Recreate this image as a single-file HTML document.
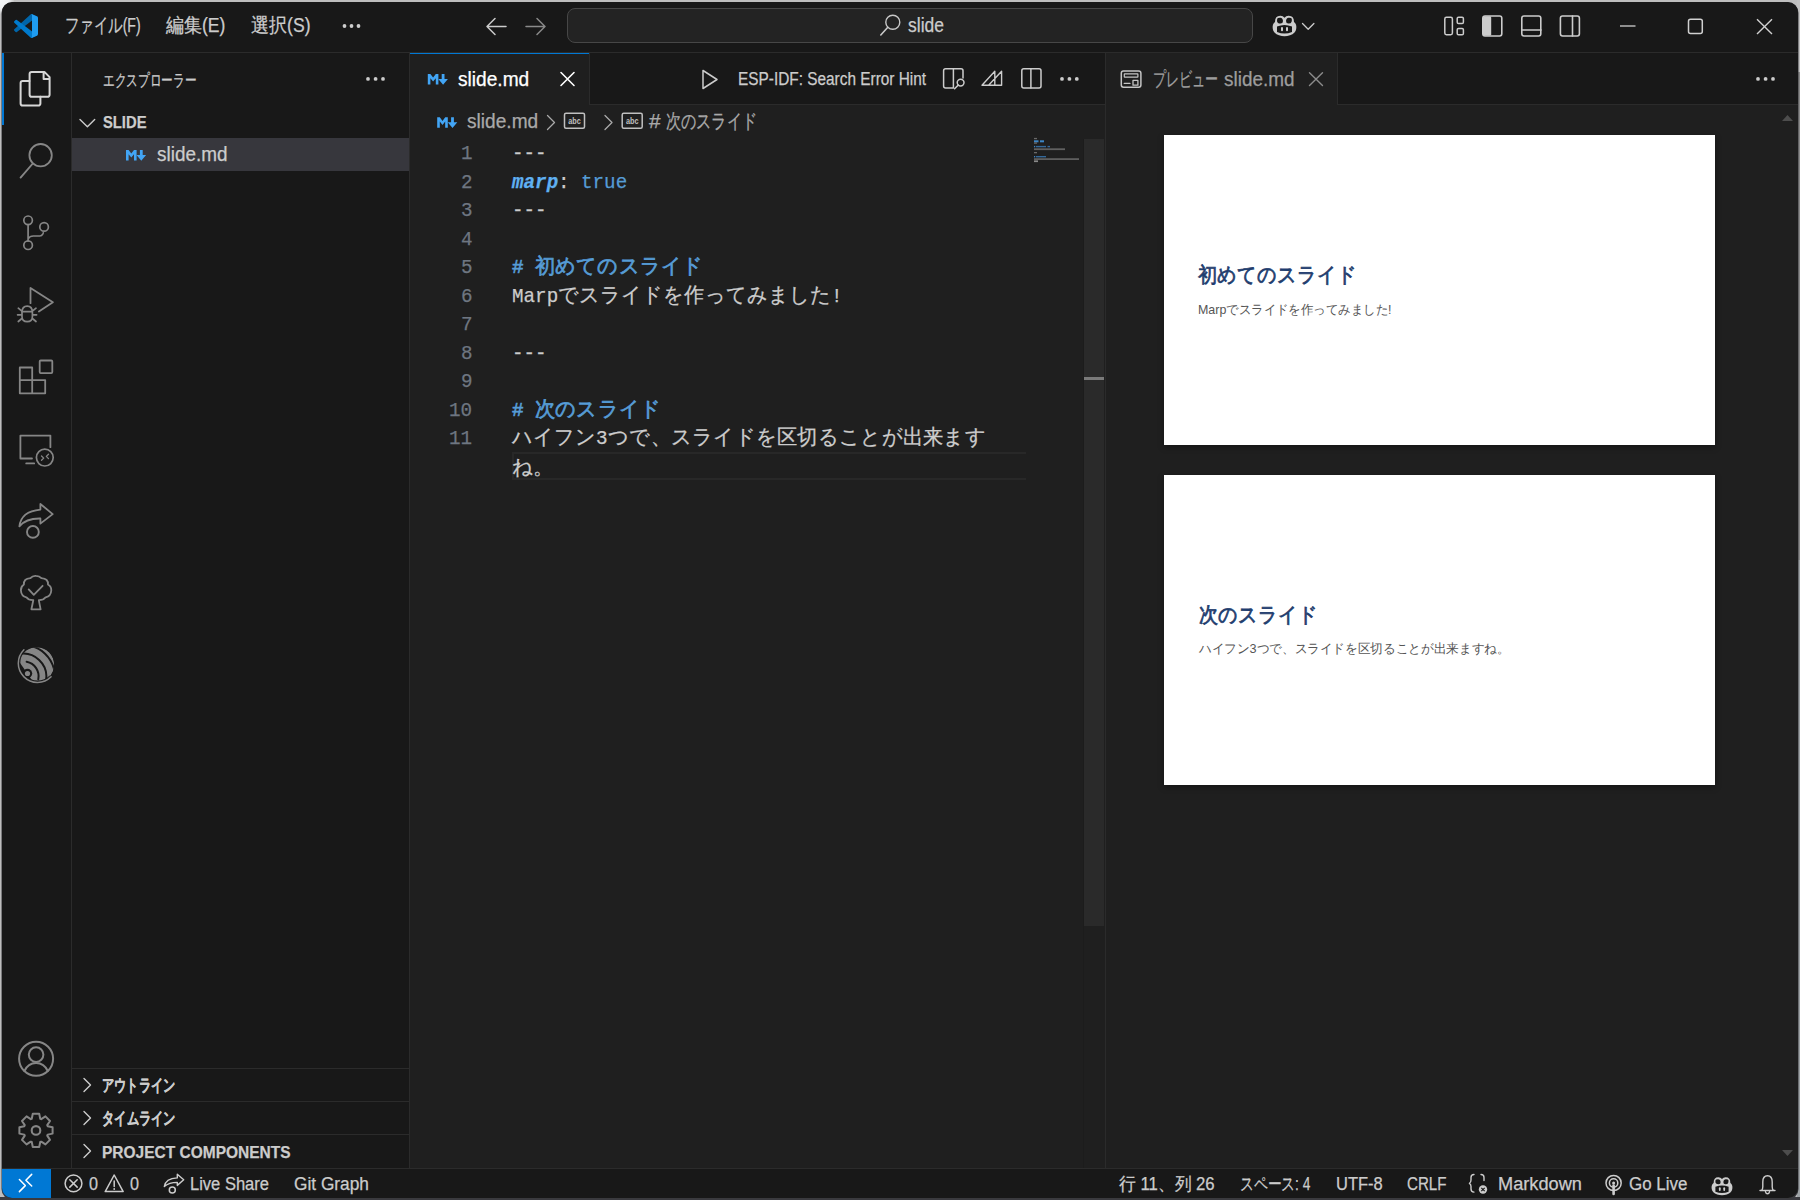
<!DOCTYPE html>
<html lang="ja">
<head>
<meta charset="utf-8">
<title>slide.md - Visual Studio Code</title>
<style>
*{box-sizing:border-box;margin:0;padding:0}
html,body{width:1800px;height:1200px;overflow:hidden;background:#bebebe;font-family:"Liberation Sans",sans-serif;color:#cccccc}
.a{position:absolute}
.t{position:absolute;white-space:pre;transform-origin:0 0;line-height:1;-webkit-text-stroke:0.25px currentColor}
#ov{position:absolute;left:0;top:0;width:1800px;height:1200px;overflow:visible}
</style>
</head>
<body>

<div class="a" style="left:0;top:0;width:14px;height:14px;background:radial-gradient(circle at 0 0,#f4f6f7 0,#eef0f1 9px,#c4c4c4 14px)"></div>
<div class="a" style="left:1797px;top:0;width:3px;height:72px;background:#c2c2c2"></div>
<div class="a" style="left:1797px;top:72px;width:3px;height:488px;background:#8c8c8c"></div>
<div class="a" style="left:1797px;top:560px;width:3px;height:640px;background:#9ea3a6"></div>
<div class="a" style="left:0;top:1197px;width:1800px;height:3px;background:#3b3b40"></div>
<div class="a" style="left:2px;top:2px;width:1796px;height:1196px;border-radius:10px;background:#181818;overflow:hidden;box-shadow:0 1px 0 0.5px #3a3a3e">
  <!-- status bar remote item -->
  <div class="a" style="left:0;top:1167px;width:49px;height:29px;background:#0078d4"></div>
</div>

<!-- title bar border -->
<div class="a" style="left:2px;top:52px;width:1796px;height:1px;background:#2b2b2b"></div>
<!-- search box -->
<div class="a" style="left:567px;top:8px;width:686px;height:35px;border:1px solid #474747;border-radius:8px;background:#232323"></div>

<!-- activity bar -->
<div class="a" style="left:71px;top:53px;width:1px;height:1115px;background:#2b2b2b"></div>
<div class="a" style="left:2px;top:53px;width:2px;height:72px;background:#0078d4"></div>

<!-- sidebar -->
<div class="a" style="left:409px;top:53px;width:1px;height:1115px;background:#2b2b2b"></div>
<div class="a" style="left:72px;top:138px;width:337px;height:33px;background:#37373d"></div>
<div class="a" style="left:72px;top:1068px;width:337px;height:1px;background:#2b2b2b"></div>
<div class="a" style="left:72px;top:1101px;width:337px;height:1px;background:#2b2b2b"></div>
<div class="a" style="left:72px;top:1134px;width:337px;height:1px;background:#2b2b2b"></div>

<!-- editor group 1 -->
<div class="a" style="left:410px;top:53px;width:695px;height:1115px;background:#1f1f1f"></div>
<div class="a" style="left:589px;top:53px;width:516px;height:52px;background:#181818;border-bottom:1px solid #2b2b2b;border-left:1px solid #2b2b2b"></div>
<div class="a" style="left:410px;top:53px;width:179px;height:1px;background:#0078d4"></div>
<!-- current line highlight -->
<div class="a" style="left:512px;top:452px;width:514px;height:28px;border:2px solid #282828;border-right:none"></div>
<!-- minimap slider / scrollbar -->
<div class="a" style="left:1084px;top:139px;width:20px;height:787px;background:#2a2a2a"></div>
<div class="a" style="left:1084px;top:377px;width:20px;height:3px;background:#7a7a7a"></div>
<div class="a" style="left:1083px;top:139px;width:1px;height:1029px;background:#1c1c1c"></div>

<!-- group separator -->
<div class="a" style="left:1105px;top:53px;width:1px;height:1115px;background:#2b2b2b"></div>

<!-- editor group 2 -->
<div class="a" style="left:1106px;top:53px;width:692px;height:1115px;background:#1f1f1f"></div>
<div class="a" style="left:1337px;top:53px;width:461px;height:52px;background:#181818;border-bottom:1px solid #2b2b2b;border-left:1px solid #2b2b2b"></div>

<div class="a" style="left:1164px;top:135px;width:551px;height:310px;background:#ffffff;box-shadow:0 2px 6px rgba(0,0,0,.35)"></div>
<div class="a" style="left:1164px;top:475px;width:551px;height:310px;background:#ffffff;box-shadow:0 2px 6px rgba(0,0,0,.35)"></div>

<!-- status bar -->
<div class="a" style="left:2px;top:1168px;width:1796px;height:1px;background:#2b2b2b"></div>

<div class="t" id="t0" style="left:65.00px;top:16.43px;font-size:19.5px;color:#cccccc;font-weight:normal;font-family:'Liberation Sans',sans-serif;font-style:normal;transform:scaleX(0.7206);">ファイル(F)</div>
<div class="t" id="t1" style="left:165.60px;top:16.43px;font-size:19.5px;color:#cccccc;font-weight:normal;font-family:'Liberation Sans',sans-serif;font-style:normal;transform:scaleX(0.9000);">編集(E)</div>
<div class="t" id="t2" style="left:250.90px;top:16.43px;font-size:19.5px;color:#cccccc;font-weight:normal;font-family:'Liberation Sans',sans-serif;font-style:normal;transform:scaleX(0.9015);">選択(S)</div>
<div class="t" id="t3" style="left:908.30px;top:16.03px;font-size:19.5px;color:#cccccc;font-weight:normal;font-family:'Liberation Sans',sans-serif;font-style:normal;transform:scaleX(0.8975);">slide</div>
<div class="t" id="t4" style="left:102.50px;top:71.97px;font-size:16.5px;color:#cccccc;font-weight:normal;font-family:'Liberation Sans',sans-serif;font-style:normal;transform:scaleX(0.6875);">エクスプローラー</div>
<div class="t" id="t5" style="left:102.50px;top:113.97px;font-size:16.5px;color:#cccccc;font-weight:bold;font-family:'Liberation Sans',sans-serif;font-style:normal;transform:scaleX(0.8952);">SLIDE</div>
<div class="t" id="t6" style="left:156.50px;top:144.93px;font-size:19.5px;color:#cccccc;font-weight:normal;font-family:'Liberation Sans',sans-serif;font-style:normal;transform:scaleX(0.9707);">slide.md</div>
<div class="t" id="t7" style="left:102.40px;top:1076.97px;font-size:16.5px;color:#cccccc;font-weight:bold;font-family:'Liberation Sans',sans-serif;font-style:normal;transform:scaleX(0.7176);">アウトライン</div>
<div class="t" id="t8" style="left:102.40px;top:1109.97px;font-size:16.5px;color:#cccccc;font-weight:bold;font-family:'Liberation Sans',sans-serif;font-style:normal;transform:scaleX(0.7216);">タイムライン</div>
<div class="t" id="t9" style="left:102.40px;top:1143.97px;font-size:16.5px;color:#cccccc;font-weight:bold;font-family:'Liberation Sans',sans-serif;font-style:normal;transform:scaleX(0.9393);">PROJECT COMPONENTS</div>
<div class="t" id="t10" style="left:457.80px;top:70.22px;font-size:19.5px;color:#ffffff;font-weight:normal;font-family:'Liberation Sans',sans-serif;font-style:normal;transform:scaleX(0.9804);">slide.md</div>
<div class="t" id="t11" style="left:737.90px;top:70.00px;font-size:18px;color:#cccccc;font-weight:normal;font-family:'Liberation Sans',sans-serif;font-style:normal;transform:scaleX(0.8548);">ESP-IDF: Search Error Hint</div>
<div class="t" id="t12" style="left:1152.80px;top:70.42px;font-size:19.5px;color:#9d9d9d;font-weight:normal;font-family:'Liberation Sans',sans-serif;font-style:normal;transform:scaleX(0.6530);">プレビュー</div>
<div class="t" id="t13" style="left:1223.60px;top:70.42px;font-size:19.5px;color:#9d9d9d;font-weight:normal;font-family:'Liberation Sans',sans-serif;font-style:normal;transform:scaleX(0.9721);">slide.md</div>
<div class="t" id="t14" style="left:466.80px;top:112.02px;font-size:19.5px;color:#a9a9a9;font-weight:normal;font-family:'Liberation Sans',sans-serif;font-style:normal;transform:scaleX(0.9804);">slide.md</div>
<div class="t" id="t15" style="left:649.00px;top:112.02px;font-size:19.5px;color:#a9a9a9;font-weight:normal;font-family:'Liberation Sans',sans-serif;font-style:normal;transform:scaleX(1.0682);">#</div>
<div class="t" id="t16" style="left:666.00px;top:112.02px;font-size:19.5px;color:#a9a9a9;font-weight:normal;font-family:'Liberation Sans',sans-serif;font-style:normal;transform:scaleX(0.7583);">次のスライド</div>
<div class="t" id="t17" style="left:460.65px;top:143.34px;font-size:21px;color:#6e7681;font-weight:normal;font-family:'Liberation Mono',monospace;font-style:normal;transform:scaleX(0.9160);">1</div>
<div class="t" id="t18" style="left:460.65px;top:171.84px;font-size:21px;color:#6e7681;font-weight:normal;font-family:'Liberation Mono',monospace;font-style:normal;transform:scaleX(0.9160);">2</div>
<div class="t" id="t19" style="left:460.65px;top:200.34px;font-size:21px;color:#6e7681;font-weight:normal;font-family:'Liberation Mono',monospace;font-style:normal;transform:scaleX(0.9160);">3</div>
<div class="t" id="t20" style="left:460.65px;top:228.84px;font-size:21px;color:#6e7681;font-weight:normal;font-family:'Liberation Mono',monospace;font-style:normal;transform:scaleX(0.9160);">4</div>
<div class="t" id="t21" style="left:460.65px;top:257.34px;font-size:21px;color:#6e7681;font-weight:normal;font-family:'Liberation Mono',monospace;font-style:normal;transform:scaleX(0.9160);">5</div>
<div class="t" id="t22" style="left:460.65px;top:285.84px;font-size:21px;color:#6e7681;font-weight:normal;font-family:'Liberation Mono',monospace;font-style:normal;transform:scaleX(0.9160);">6</div>
<div class="t" id="t23" style="left:460.65px;top:314.34px;font-size:21px;color:#6e7681;font-weight:normal;font-family:'Liberation Mono',monospace;font-style:normal;transform:scaleX(0.9160);">7</div>
<div class="t" id="t24" style="left:460.65px;top:342.84px;font-size:21px;color:#6e7681;font-weight:normal;font-family:'Liberation Mono',monospace;font-style:normal;transform:scaleX(0.9160);">8</div>
<div class="t" id="t25" style="left:460.65px;top:371.34px;font-size:21px;color:#6e7681;font-weight:normal;font-family:'Liberation Mono',monospace;font-style:normal;transform:scaleX(0.9160);">9</div>
<div class="t" id="t26" style="left:449.10px;top:399.84px;font-size:21px;color:#6e7681;font-weight:normal;font-family:'Liberation Mono',monospace;font-style:normal;transform:scaleX(0.9160);">10</div>
<div class="t" id="t27" style="left:449.10px;top:428.34px;font-size:21px;color:#6e7681;font-weight:normal;font-family:'Liberation Mono',monospace;font-style:normal;transform:scaleX(0.9160);">11</div>
<div class="t" id="t28" style="left:512.00px;top:143.34px;font-size:21px;color:#cccccc;font-weight:normal;font-family:'Liberation Mono',monospace;font-style:normal;transform:scaleX(0.9164);">---</div>
<div class="t" id="t29" style="left:512.00px;top:171.84px;font-size:21px;color:#5fb0f2;font-weight:bold;font-family:'Liberation Mono',monospace;font-style:italic;transform:scaleX(0.9163);">marp</div>
<div class="t" id="t30" style="left:558.20px;top:171.84px;font-size:21px;color:#cccccc;font-weight:normal;font-family:'Liberation Mono',monospace;font-style:normal;transform:scaleX(0.9160);">: </div>
<div class="t" id="t31" style="left:581.30px;top:171.84px;font-size:21px;color:#569cd6;font-weight:normal;font-family:'Liberation Mono',monospace;font-style:normal;transform:scaleX(0.9163);">true</div>
<div class="t" id="t32" style="left:512.00px;top:200.34px;font-size:21px;color:#cccccc;font-weight:normal;font-family:'Liberation Mono',monospace;font-style:normal;transform:scaleX(0.9164);">---</div>
<div class="t" id="t33" style="left:512.00px;top:257.34px;font-size:21px;color:#569cd6;font-weight:normal;font-family:'Liberation Mono',monospace;font-style:normal;-webkit-text-stroke:0.7px currentColor;transform:scaleX(0.9160);"># </div>
<div class="t" id="t34" style="left:535.10px;top:257.34px;font-size:21px;color:#569cd6;font-weight:normal;font-family:'Liberation Mono',monospace;font-style:normal;-webkit-text-stroke:0.7px currentColor;transform:scaleX(0.9600);">初めてのスライド</div>
<div class="t" id="t35" style="left:512.00px;top:285.84px;font-size:21px;color:#cccccc;font-weight:normal;font-family:'Liberation Mono',monospace;font-style:normal;transform:scaleX(0.9163);">Marp</div>
<div class="t" id="t36" style="left:558.20px;top:285.84px;font-size:21px;color:#cccccc;font-weight:normal;font-family:'Liberation Mono',monospace;font-style:normal;transform:scaleX(0.9579);">でスライドを作ってみました</div>
<div class="t" id="t37" style="left:831.20px;top:285.84px;font-size:21px;color:#cccccc;font-weight:normal;font-family:'Liberation Mono',monospace;font-style:normal;transform:scaleX(0.9160);">!</div>
<div class="t" id="t38" style="left:512.00px;top:342.84px;font-size:21px;color:#cccccc;font-weight:normal;font-family:'Liberation Mono',monospace;font-style:normal;transform:scaleX(0.9164);">---</div>
<div class="t" id="t39" style="left:512.00px;top:399.84px;font-size:21px;color:#569cd6;font-weight:normal;font-family:'Liberation Mono',monospace;font-style:normal;-webkit-text-stroke:0.7px currentColor;transform:scaleX(0.9160);"># </div>
<div class="t" id="t40" style="left:535.10px;top:399.84px;font-size:21px;color:#569cd6;font-weight:normal;font-family:'Liberation Mono',monospace;font-style:normal;-webkit-text-stroke:0.7px currentColor;transform:scaleX(0.9618);">次のスライド</div>
<div class="t" id="t41" style="left:512.00px;top:428.34px;font-size:21px;color:#cccccc;font-weight:normal;font-family:'Liberation Mono',monospace;font-style:normal;transform:scaleX(0.9545);">ハイフン</div>
<div class="t" id="t42" style="left:596.00px;top:428.34px;font-size:21px;color:#cccccc;font-weight:normal;font-family:'Liberation Mono',monospace;font-style:normal;transform:scaleX(0.9160);">3</div>
<div class="t" id="t43" style="left:607.55px;top:428.34px;font-size:21px;color:#cccccc;font-weight:normal;font-family:'Liberation Mono',monospace;font-style:normal;transform:scaleX(0.9668);">つで、スライドを区切ることが出来ます</div>
<div class="t" id="t44" style="left:512.00px;top:457.84px;font-size:21px;color:#cccccc;font-weight:normal;font-family:'Liberation Mono',monospace;font-style:normal;transform:scaleX(0.9767);">ね。</div>
<div class="t" id="t45" style="left:89.30px;top:1175.30px;font-size:18px;color:#cccccc;font-weight:normal;font-family:'Liberation Sans',sans-serif;font-style:normal;transform:scaleX(0.8986);">0</div>
<div class="t" id="t46" style="left:130.00px;top:1175.30px;font-size:18px;color:#cccccc;font-weight:normal;font-family:'Liberation Sans',sans-serif;font-style:normal;transform:scaleX(0.8986);">0</div>
<div class="t" id="t47" style="left:190.00px;top:1175.30px;font-size:18px;color:#cccccc;font-weight:normal;font-family:'Liberation Sans',sans-serif;font-style:normal;transform:scaleX(0.9179);">Live Share</div>
<div class="t" id="t48" style="left:294.30px;top:1175.30px;font-size:18px;color:#cccccc;font-weight:normal;font-family:'Liberation Sans',sans-serif;font-style:normal;transform:scaleX(0.9599);">Git Graph</div>
<div class="t" id="t49" style="left:1119.30px;top:1175.30px;font-size:18px;color:#cccccc;font-weight:normal;font-family:'Liberation Sans',sans-serif;font-style:normal;transform:scaleX(0.9317);">行 11、列 26</div>
<div class="t" id="t50" style="left:1239.90px;top:1175.30px;font-size:18px;color:#cccccc;font-weight:normal;font-family:'Liberation Sans',sans-serif;font-style:normal;transform:scaleX(0.7651);">スペース: 4</div>
<div class="t" id="t51" style="left:1335.50px;top:1175.30px;font-size:18px;color:#cccccc;font-weight:normal;font-family:'Liberation Sans',sans-serif;font-style:normal;transform:scaleX(0.9157);">UTF-8</div>
<div class="t" id="t52" style="left:1406.50px;top:1175.30px;font-size:18px;color:#cccccc;font-weight:normal;font-family:'Liberation Sans',sans-serif;font-style:normal;transform:scaleX(0.8401);">CRLF</div>
<div class="t" id="t53" style="left:1497.60px;top:1175.30px;font-size:18px;color:#cccccc;font-weight:normal;font-family:'Liberation Sans',sans-serif;font-style:normal;transform:scaleX(1.0105);">Markdown</div>
<div class="t" id="t54" style="left:1628.50px;top:1175.30px;font-size:18px;color:#cccccc;font-weight:normal;font-family:'Liberation Sans',sans-serif;font-style:normal;transform:scaleX(0.9428);">Go Live</div>
<div class="t" id="t55" style="left:1198.30px;top:263.65px;font-size:21px;color:#1f3d6e;font-weight:normal;font-family:'Liberation Sans',sans-serif;font-style:normal;-webkit-text-stroke:0.75px currentColor;transform:scaleX(0.9114);">初めてのスライド</div>
<div class="t" id="t56" style="left:1198.30px;top:303.45px;font-size:13px;color:#555555;font-weight:normal;font-family:'Liberation Sans',sans-serif;font-style:normal;-webkit-text-stroke:0;transform:scaleX(0.9563);">Marpでスライドを作ってみました!</div>
<div class="t" id="t57" style="left:1198.90px;top:603.65px;font-size:21px;color:#1f3d6e;font-weight:normal;font-family:'Liberation Sans',sans-serif;font-style:normal;-webkit-text-stroke:0.75px currentColor;transform:scaleX(0.9084);">次のスライド</div>
<div class="t" id="t58" style="left:1198.90px;top:641.95px;font-size:13px;color:#555555;font-weight:normal;font-family:'Liberation Sans',sans-serif;font-style:normal;-webkit-text-stroke:0;transform:scaleX(0.9726);">ハイフン3つで、スライドを区切ることが出来ますね。</div>

<svg id="ov" viewBox="0 0 1800 1200">
<g transform="translate(14,14) scale(0.24)">
<path fill="#0065A9" d="M96.46 10.8 75.86.87a6.23 6.23 0 0 0-7.1 1.2L1.3 63.6a4.16 4.16 0 0 0 0 6.16l5.5 5a4.16 4.16 0 0 0 5.32.24L93.32 13.4A4.14 4.14 0 0 1 100 16.7v-.24a6.25 6.25 0 0 0-3.54-5.65z"/>
<path fill="#007ACC" d="m96.46 89.2-20.6 9.93a6.23 6.23 0 0 1-7.1-1.2L1.3 36.4a4.16 4.16 0 0 1 0-6.16l5.5-5a4.16 4.16 0 0 1 5.32-.24l81.2 61.6a4.14 4.14 0 0 0 6.68-3.3v.24a6.25 6.25 0 0 1-3.54 5.65z"/>
<path fill="#1F9CF0" d="M75.86 99.13a6.23 6.23 0 0 1-7.1-1.2c2.3 2.3 6.24.67 6.24-2.58V4.65c0-3.25-3.94-4.88-6.24-2.58a6.23 6.23 0 0 1 7.1-1.2l20.6 9.92A6.25 6.25 0 0 1 100 16.43v67.14a6.25 6.25 0 0 1-3.54 5.64z"/>
</g>
<circle cx="344.5" cy="26" r="1.9" fill="#cccccc"/>
<circle cx="351.5" cy="26" r="1.9" fill="#cccccc"/>
<circle cx="358.5" cy="26" r="1.9" fill="#cccccc"/>
<path d="M487 26.5h19 M495 18.5l-8 8 8 8" fill="none" stroke="#cccccc" stroke-width="1.5" stroke-linecap="round" stroke-linejoin="round"/>
<path d="M526 26.5h19 M537 18.5l8 8-8 8" fill="none" stroke="#8a8a8a" stroke-width="1.5" stroke-linecap="round" stroke-linejoin="round"/>
<circle cx="892.8" cy="22.3" r="7" fill="none" stroke="#c8c8c8" stroke-width="1.4" stroke-linecap="round" stroke-linejoin="round"/><path d="M887.8 27.3 880.8 35" fill="none" stroke="#c8c8c8" stroke-width="1.6" stroke-linecap="round" stroke-linejoin="round"/>
<g transform="translate(1272,14.5) scale(1.0)">
<path d="M3 7.5 Q3 1 8.5 1.2 Q11 1.3 12.5 3.2 Q14 1.3 16.5 1.2 Q22 1 22 7.5 Q25 9.5 24.2 14.5 Q23.5 19 18 20.8 Q12.5 22.5 7 20.8 Q1.5 19 .8 14.5 Q0 9.5 3 7.5Z" fill="#cccccc"/>
<path d="M5.2 4.2 Q5.6 3.2 8.4 3.3 Q10.8 3.5 11 6.5 Q11 9 8.6 9.1 Q5 9.2 5 6.3Z M14 6.5 Q14.2 3.5 16.6 3.3 Q19.4 3.2 19.8 4.2 Q20 6.3 19.6 7.2 Q19 9.2 16.4 9.1 Q14 9 14 6.5Z" fill="#181818"/>
<path d="M5 12 Q12.5 9 20 12 L20 17.5 Q12.5 20.5 5 17.5Z" fill="#181818"/>
<rect x="9" y="12.5" width="2" height="4.2" rx="1" fill="#cccccc"/><rect x="14" y="12.5" width="2" height="4.2" rx="1" fill="#cccccc"/>
</g>
<path d="M1302.5 23.5l5.7 5.7 5.7-5.7" fill="none" stroke="#cccccc" stroke-width="1.3" stroke-linecap="round" stroke-linejoin="round"/>
<rect x="1444.8" y="17.3" width="7.6" height="17.4" rx="1.6" fill="none" stroke="#cccccc" stroke-width="1.5" stroke-linecap="round" stroke-linejoin="round"/>
<rect x="1457.2" y="17.3" width="6.2" height="6.2" rx="1.3" fill="none" stroke="#cccccc" stroke-width="1.5" stroke-linecap="round" stroke-linejoin="round"/><rect x="1457.2" y="28.5" width="6.2" height="6.2" rx="1.3" fill="none" stroke="#cccccc" stroke-width="1.5" stroke-linecap="round" stroke-linejoin="round"/>
<rect x="1482.8" y="16" width="19" height="20" rx="2.2" fill="none" stroke="#cccccc" stroke-width="1.6" stroke-linecap="round" stroke-linejoin="round"/><rect x="1483" y="16.3" width="8.2" height="19.4" rx="1.4" fill="#cccccc"/>
<rect x="1521.8" y="16" width="19" height="20" rx="2.2" fill="none" stroke="#cccccc" stroke-width="1.6" stroke-linecap="round" stroke-linejoin="round"/><path d="M1522 30h19" fill="none" stroke="#cccccc" stroke-width="1.6" stroke-linecap="round" stroke-linejoin="round"/>
<rect x="1560.4" y="16" width="19" height="20" rx="2.2" fill="none" stroke="#cccccc" stroke-width="1.6" stroke-linecap="round" stroke-linejoin="round"/><path d="M1572.5 16v20" fill="none" stroke="#cccccc" stroke-width="1.6" stroke-linecap="round" stroke-linejoin="round"/>
<path d="M1620 26h15.5" stroke="#d0d0d0" stroke-width="1.3"/>
<rect x="1688.5" y="19.3" width="13.8" height="14.2" rx="2" fill="none" stroke="#d0d0d0" stroke-width="1.5"/>
<path d="M1757 19.2 1772 34 M1772 19.2 1757 34" stroke="#d0d0d0" stroke-width="1.4"/>
<path d="M29.6 74a2.1 2.1 0 0 1 2.1-2.1h12.7l5.2 5.2v17.6a2.1 2.1 0 0 1-2.1 2.1H31.7a2.1 2.1 0 0 1-2.1-2.1Z M43.6 72v7.1h6" fill="none" stroke="#d7d7d7" stroke-width="2" stroke-linecap="round" stroke-linejoin="round"/>
<path d="M29.4 81H22.7a2.1 2.1 0 0 0-2.1 2.1v20.4a2.1 2.1 0 0 0 2.1 2.1h15.6a2.1 2.1 0 0 0 2.1-2.1v-6.7" fill="none" stroke="#d7d7d7" stroke-width="2" stroke-linecap="round" stroke-linejoin="round"/>
<circle cx="40.6" cy="155.2" r="11.2" fill="none" stroke="#868686" stroke-width="1.8" stroke-linecap="round" stroke-linejoin="round"/><path d="M32.8 163.5 20.6 177.6" fill="none" stroke="#868686" stroke-width="1.9" stroke-linecap="round" stroke-linejoin="round"/>
<circle cx="28.1" cy="220.3" r="4.3" fill="none" stroke="#868686" stroke-width="1.7" stroke-linecap="round" stroke-linejoin="round"/><circle cx="28.1" cy="245.2" r="4.3" fill="none" stroke="#868686" stroke-width="1.7" stroke-linecap="round" stroke-linejoin="round"/><circle cx="44.1" cy="226.9" r="4.3" fill="none" stroke="#868686" stroke-width="1.7" stroke-linecap="round" stroke-linejoin="round"/>
<path d="M28.1 224.6v16.3 M28.3 238.6q1.5-2.6 5-2.6h6.6q1.8 0 3-2.2l.4-1" fill="none" stroke="#868686" stroke-width="1.7" stroke-linecap="round" stroke-linejoin="round"/>
<path d="M30.5 303.2V288l22.4 14.3-14 9.3" fill="none" stroke="#868686" stroke-width="1.8" stroke-linecap="round" stroke-linejoin="round"/>
<path d="M21.8 311.7h10.5 M22 312.5q0-6.4 5.2-6.4 5.2 0 5.2 6.4v4q0 5.2-5.2 5.2-5.2 0-5.2-5.2Z M17.6 314.8h4.2 M32.6 314.8h4 M18.3 308.2l3.6 3 M36 308.2l-3.6 3 M18.3 321.5l3.6-3 M36 321.5l-3.6-3" fill="none" stroke="#868686" stroke-width="1.7" stroke-linecap="round" stroke-linejoin="round"/>
<path d="M19.8 367.5h12.4v12.6h13v13.2H19.8Z M32.2 380.1v13.2 M19.8 380.1h12.4" fill="none" stroke="#868686" stroke-width="1.8" stroke-linecap="round" stroke-linejoin="round"/><rect x="39.7" y="360.5" width="12.6" height="12.6" rx="1" fill="none" stroke="#868686" stroke-width="1.8" stroke-linecap="round" stroke-linejoin="round"/>
<path d="M32 458.5H20.4V435.6h30v11.6 M26.2 463.4h8" fill="none" stroke="#868686" stroke-width="1.8" stroke-linecap="round" stroke-linejoin="round"/><circle cx="44.8" cy="457.6" r="8.4" fill="none" stroke="#868686" stroke-width="1.7" stroke-linecap="round" stroke-linejoin="round"/><path d="M41.5 456l2.2 2.1-2.2 2.2 M48.5 454.3l-2.2 2.1 2.2 2.2" fill="none" stroke="#868686" stroke-width="1.3" stroke-linecap="round" stroke-linejoin="round"/>
<path d="M19.4 526.4Q21 511.4 40.4 509.6V504l12.3 10.1-12.3 9.5v-5.1Q26 518.2 19.4 526.4Z" fill="none" stroke="#868686" stroke-width="1.8" stroke-linecap="round" stroke-linejoin="round"/><circle cx="32.9" cy="531.9" r="5.9" fill="none" stroke="#868686" stroke-width="1.9" stroke-linecap="round" stroke-linejoin="round"/>
<path d="M33.3 600.2Q28.5 600.3 26.4 597.3Q21.2 596.2 20.9 590.3Q20.8 586.5 23.9 584.5Q23.5 578.7 30.4 578.2Q32.6 575.6 35.9 575.9Q39.4 575.9 41.4 578.2Q48.4 578.7 48 584.5Q51.4 586.5 51.3 590.3Q51 596.2 45.6 597.3Q43.3 600.3 38.8 600.2L40.6 609.3H31.4Z" fill="none" stroke="#868686" stroke-width="1.8" stroke-linecap="round" stroke-linejoin="round"/><path d="M28.7 589.4l5.1 5.5 8.8-9.1" fill="none" stroke="#868686" stroke-width="1.8" stroke-linecap="round" stroke-linejoin="round"/>
<clipPath id="espc"><circle cx="36.6" cy="664.8" r="17.6"/></clipPath>
<g clip-path="url(#espc)">
<circle cx="36.6" cy="664.8" r="17.6" fill="#868686"/>
<path d="M0.9 635.2 46.5 701.2 0 701.2Z" fill="#181818"/>
<circle cx="27.5" cy="673.5" r="4.7" fill="#181818"/>
<path d="M26.62 661.77A14.8 14.8 0 0 1 38.28 679.38" fill="none" stroke="#181818" stroke-width="2" stroke-linecap="round"/>
<path d="M17.35 654.38A23 23 0 0 1 45.80 681.38" fill="none" stroke="#181818" stroke-width="2"/>
<path d="M15.12 646.08A31.6 31.6 0 0 1 54.21 683.17" fill="none" stroke="#181818" stroke-width="2"/>
<path d="M23.9 649.7A18.9 18.9 0 1 0 51.1 676.8" fill="none" stroke="#181818" stroke-width="4"/>
</g>
<circle cx="27.5" cy="673.5" r="2.6" fill="#868686"/>
<path d="M23.9 649.7A18.9 18.9 0 1 0 51.1 676.8" fill="none" stroke="#868686" stroke-width="1.5" stroke-linecap="round"/>

<circle cx="36.1" cy="1058.75" r="17" fill="none" stroke="#868686" stroke-width="2" stroke-linecap="round" stroke-linejoin="round"/><circle cx="36.1" cy="1054.6" r="7.3" fill="none" stroke="#868686" stroke-width="2" stroke-linecap="round" stroke-linejoin="round"/><path d="M24.4 1071Q28 1062.9 36.1 1062.9 44.2 1062.9 47.8 1071" fill="none" stroke="#868686" stroke-width="2" stroke-linecap="round" stroke-linejoin="round"/>
<path d="M31.76 1118.75 L32.78 1113.81 L39.22 1113.81 L40.24 1118.75 L41.24 1119.16 L45.45 1116.39 L50.01 1120.95 L47.24 1125.16 L47.65 1126.16 L52.59 1127.18 L52.59 1133.62 L47.65 1134.64 L47.24 1135.64 L50.01 1139.85 L45.45 1144.41 L41.24 1141.64 L40.24 1142.05 L39.22 1146.99 L32.78 1146.99 L31.76 1142.05 L30.76 1141.64 L26.55 1144.41 L21.99 1139.85 L24.76 1135.64 L24.35 1134.64 L19.41 1133.62 L19.41 1127.18 L24.35 1126.16 L24.76 1125.16 L21.99 1120.95 L26.55 1116.39 L30.76 1119.16Z" fill="none" stroke="#868686" stroke-width="2" stroke-linecap="round" stroke-linejoin="round"/><circle cx="36" cy="1130.4" r="4.3" fill="none" stroke="#868686" stroke-width="2.1" stroke-linecap="round" stroke-linejoin="round"/>
<circle cx="368" cy="78.9" r="1.9" fill="#cccccc"/>
<circle cx="375.6" cy="78.9" r="1.9" fill="#cccccc"/>
<circle cx="383" cy="78.9" r="1.9" fill="#cccccc"/>
<path d="M80 119.6l7.4 7.2 7.3-7.2" fill="none" stroke="#cccccc" stroke-width="1.4" stroke-linecap="round" stroke-linejoin="round"/>
<g transform="translate(126,150) scale(1.0)" fill="#42a5f5">
<path d="M0 0h2.6l2.7 3.6L8 0h2.6v10.5H8V4.2L5.3 7.6 2.6 4.2v6.3H0Z"/>
<path d="M13.9 0h2.8v5h3.4l-4.8 5.7-4.8-5.7h3.4Z"/>
</g>
<path d="M84 1078.5l6.5 6.5-6.5 6.5" fill="none" stroke="#cccccc" stroke-width="1.4" stroke-linecap="round" stroke-linejoin="round"/>
<path d="M84 1111.5l6.5 6.5-6.5 6.5" fill="none" stroke="#cccccc" stroke-width="1.4" stroke-linecap="round" stroke-linejoin="round"/>
<path d="M84 1144.5l6.5 6.5-6.5 6.5" fill="none" stroke="#cccccc" stroke-width="1.4" stroke-linecap="round" stroke-linejoin="round"/>
<g transform="translate(427.8,74) scale(1.0)" fill="#42a5f5">
<path d="M0 0h2.6l2.7 3.6L8 0h2.6v10.5H8V4.2L5.3 7.6 2.6 4.2v6.3H0Z"/>
<path d="M13.9 0h2.8v5h3.4l-4.8 5.7-4.8-5.7h3.4Z"/>
</g>
<path d="M561 72.5 574 85.5 M574 72.5 561 85.5" fill="none" stroke="#ffffff" stroke-width="1.6" stroke-linecap="round" stroke-linejoin="round"/>
<path d="M703 70.5v18l14-9Z" fill="none" stroke="#cccccc" stroke-width="1.5" stroke-linecap="round" stroke-linejoin="round"/>
<path d="M963 78V70.7a2 2 0 0 0-2-2h-15.4a2 2 0 0 0-2 2v15.4a2 2 0 0 0 2 2h7.8 M953.4 68.8v19.3" fill="none" stroke="#cccccc" stroke-width="1.5" stroke-linecap="round" stroke-linejoin="round"/><circle cx="960.6" cy="82.6" r="3.4" fill="none" stroke="#cccccc" stroke-width="1.5" stroke-linecap="round" stroke-linejoin="round"/><path d="M958.3 85 954.6 88.7" fill="none" stroke="#cccccc" stroke-width="1.6" stroke-linecap="round" stroke-linejoin="round"/>
<path d="M982 85.2 994.8 71.3V85.2Z M988.6 85.2 1001.6 71.3V85.2Z" fill="none" stroke="#cccccc" stroke-width="1.4" stroke-linecap="round" stroke-linejoin="round"/>
<rect x="1021.8" y="68.8" width="19.2" height="19.2" rx="2" fill="none" stroke="#cccccc" stroke-width="1.5" stroke-linecap="round" stroke-linejoin="round"/><path d="M1030.9 68.8v19.2" fill="none" stroke="#cccccc" stroke-width="1.5" stroke-linecap="round" stroke-linejoin="round"/>
<circle cx="1062" cy="78.9" r="1.9" fill="#cccccc"/>
<circle cx="1069.4" cy="78.9" r="1.9" fill="#cccccc"/>
<circle cx="1076.8" cy="78.9" r="1.9" fill="#cccccc"/>
<g transform="translate(437.2,117.3) scale(1.0)" fill="#42a5f5">
<path d="M0 0h2.6l2.7 3.6L8 0h2.6v10.5H8V4.2L5.3 7.6 2.6 4.2v6.3H0Z"/>
<path d="M13.9 0h2.8v5h3.4l-4.8 5.7-4.8-5.7h3.4Z"/>
</g>
<path d="M547.5 115.5l7 7-7 7 M605 115.5l7 7-7 7" fill="none" stroke="#a9a9a9" stroke-width="1.3" stroke-linecap="round" stroke-linejoin="round"/>
<rect x="564.5" y="113.2" width="20" height="15" rx="1.5" fill="none" stroke="#c0c0c0" stroke-width="1.5" stroke-linecap="round" stroke-linejoin="round"/>
<text x="574.5" y="124.3" font-family="Liberation Sans" font-weight="bold" font-size="9" fill="#c0c0c0" text-anchor="middle" textLength="12.5" lengthAdjust="spacingAndGlyphs">abc</text>
<rect x="622.2" y="113.2" width="20" height="15" rx="1.5" fill="none" stroke="#c0c0c0" stroke-width="1.5" stroke-linecap="round" stroke-linejoin="round"/>
<text x="632.2" y="124.3" font-family="Liberation Sans" font-weight="bold" font-size="9" fill="#c0c0c0" text-anchor="middle" textLength="12.5" lengthAdjust="spacingAndGlyphs">abc</text>
<rect x="1034" y="137.9" width="3" height="1.3" fill="#6a6a6a"/>
<rect x="1034" y="140.3" width="4.5" height="2" fill="#3d86c6"/>
<rect x="1040" y="140.3" width="4" height="2" fill="#3d86c6"/>
<rect x="1034" y="142.4" width="3" height="1.3" fill="#6a6a6a"/>
<rect x="1034" y="145.9" width="1.2000000000000455" height="1.4" fill="#3d86c6"/>
<rect x="1036" y="145.9" width="10" height="1.4" fill="#35699a"/>
<rect x="1047.5" y="145.9" width="2.5" height="1.4" fill="#35699a"/>
<rect x="1034" y="148.3" width="31" height="1.8" fill="#606060"/>
<rect x="1034" y="152" width="3" height="1.3" fill="#6a6a6a"/>
<rect x="1034" y="156" width="1.2000000000000455" height="1.4" fill="#3d86c6"/>
<rect x="1036" y="156" width="10" height="1.4" fill="#35699a"/>
<rect x="1034" y="158.2" width="45" height="1.8" fill="#5e5e5e"/>
<rect x="1034" y="160.4" width="4" height="1.7" fill="#8a8a8a"/>
<rect x="1121.3" y="71" width="19.6" height="16.2" rx="2.2" fill="none" stroke="#c5c5c5" stroke-width="1.5" stroke-linecap="round" stroke-linejoin="round"/><rect x="1124.3" y="73.8" width="13.6" height="3.4" rx=".4" fill="none" stroke="#c5c5c5" stroke-width="1.2" stroke-linecap="round" stroke-linejoin="round"/><path d="M1124.3 83.4h5.6" fill="none" stroke="#c5c5c5" stroke-width="1.4" stroke-linecap="round" stroke-linejoin="round"/><rect x="1133" y="80.3" width="4.9" height="4.9" fill="none" stroke="#c5c5c5" stroke-width="1.3" stroke-linecap="round" stroke-linejoin="round"/>
<path d="M1309.5 72.8 1322.5 85.5 M1322.5 72.8 1309.5 85.5" fill="none" stroke="#8b8b8b" stroke-width="1.4" stroke-linecap="round" stroke-linejoin="round"/>
<circle cx="1758" cy="78.9" r="1.9" fill="#cccccc"/>
<circle cx="1765.6" cy="78.9" r="1.9" fill="#cccccc"/>
<circle cx="1773" cy="78.9" r="1.9" fill="#cccccc"/>
<path d="M1782 121h11l-5.5-6Z" fill="#4d4d4d"/>
<path d="M1782 1150h11l-5.5 6Z" fill="#4d4d4d"/>
<path d="M19.4 1179.5 25.3 1185.6 19.4 1191.6 M31.7 1174.4 25.9 1180.2 31.7 1186" fill="none" stroke="#ffffff" stroke-width="1.5" stroke-linecap="round" stroke-linejoin="round"/>
<circle cx="73.5" cy="1183.4" r="8.4" fill="none" stroke="#cccccc" stroke-width="1.5" stroke-linecap="round" stroke-linejoin="round"/><path d="M69.8 1179.7l7.4 7.4 M77.2 1179.7l-7.4 7.4" fill="none" stroke="#cccccc" stroke-width="1.5" stroke-linecap="round" stroke-linejoin="round"/>
<path d="M114.2 1175l-9 16.6h18Z M114.2 1181v5.5" fill="none" stroke="#cccccc" stroke-width="1.5" stroke-linecap="round" stroke-linejoin="round"/><circle cx="114.2" cy="1189" r=".9" fill="#cccccc"/>
<path d="M164.3 1186.6Q165.5 1178.4 177.3 1177.9V1174.3L183.7 1179.8 177.3 1185.4V1182.4Q169 1182.4 164.3 1186.6Z" fill="none" stroke="#cccccc" stroke-width="1.4" stroke-linecap="round" stroke-linejoin="round"/><circle cx="172.3" cy="1190" r="3" fill="none" stroke="#cccccc" stroke-width="1.5" stroke-linecap="round" stroke-linejoin="round"/>
<path d="M1474 1174.5q-3 0-3 3v2.5q0 2.5-1.6 3.3 1.6.8 1.6 3.3v2.5q0 3 3 3 M1481 1174.5q3 0 3 3v3" fill="none" stroke="#cccccc" stroke-width="1.4" stroke-linecap="round" stroke-linejoin="round"/><circle cx="1483" cy="1189.5" r="4.2" fill="#cccccc"/><path d="M1481.3 1187.8l3.4 3.4 M1484.7 1187.8l-3.4 3.4" stroke="#181818" stroke-width="1.1"/>
<circle cx="1613.6" cy="1183" r="7.6" fill="none" stroke="#cccccc" stroke-width="1.5" stroke-linecap="round" stroke-linejoin="round"/><circle cx="1613.6" cy="1183" r="4.2" fill="none" stroke="#cccccc" stroke-width="1.5" stroke-linecap="round" stroke-linejoin="round"/><circle cx="1613.6" cy="1183" r="1.5" fill="#cccccc"/><path d="M1613.6 1185.5v8.5" stroke="#cccccc" stroke-width="2.6" stroke-linecap="round"/>
<g transform="translate(1711,1176.3) scale(0.88)">
<path d="M3 7.5 Q3 1 8.5 1.2 Q11 1.3 12.5 3.2 Q14 1.3 16.5 1.2 Q22 1 22 7.5 Q25 9.5 24.2 14.5 Q23.5 19 18 20.8 Q12.5 22.5 7 20.8 Q1.5 19 .8 14.5 Q0 9.5 3 7.5Z" fill="#cccccc"/>
<path d="M5.2 4.2 Q5.6 3.2 8.4 3.3 Q10.8 3.5 11 6.5 Q11 9 8.6 9.1 Q5 9.2 5 6.3Z M14 6.5 Q14.2 3.5 16.6 3.3 Q19.4 3.2 19.8 4.2 Q20 6.3 19.6 7.2 Q19 9.2 16.4 9.1 Q14 9 14 6.5Z" fill="#181818"/>
<path d="M5 12 Q12.5 9 20 12 L20 17.5 Q12.5 20.5 5 17.5Z" fill="#181818"/>
<rect x="9" y="12.5" width="2" height="4.2" rx="1" fill="#cccccc"/><rect x="14" y="12.5" width="2" height="4.2" rx="1" fill="#cccccc"/>
</g>
<path d="M1760 1190.5h15 M1761.5 1190.5q1.3-1.3 1.3-3.8v-4.8q0-6.2 4.7-6.2 4.7 0 4.7 6.2v4.8q0 2.5 1.3 3.8 M1765.5 1191.8q.5 2 2 2 1.5 0 2-2" fill="none" stroke="#cccccc" stroke-width="1.4" stroke-linecap="round" stroke-linejoin="round"/>
</svg>

</body>
</html>
